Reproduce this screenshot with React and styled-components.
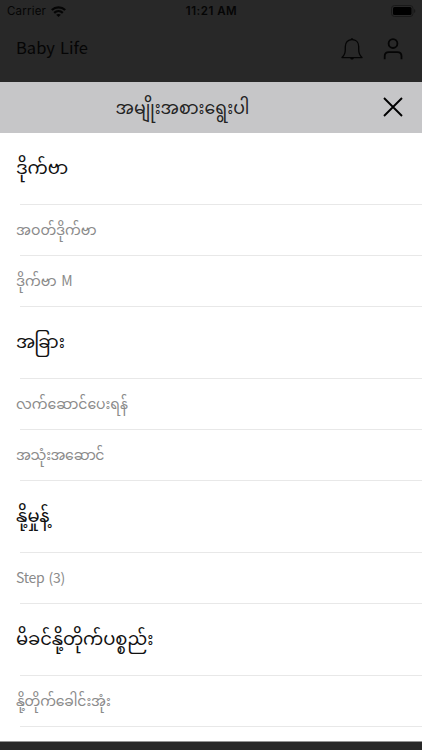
import React from 'react'
import styled, { createGlobalStyle } from 'styled-components'

const GlobalStyle = createGlobalStyle`
  * {
    box-sizing: border-box;
  }
  body {
    margin: 0;
    background-color: #282828;
    overflow: hidden;
  }
`

const Screen = styled.div`
  display: flex;
  flex-direction: column;
  width: 422px;
  height: 750px;
  overflow: hidden;
  background-color: #282828;
  font-family: "Noto Sans CJK JP", "Noto Sans Myanmar", "Noto Sans", sans-serif;
`

const StatusBar = styled.div`
  display: grid;
  grid-template-columns: 1fr auto 1fr;
  align-items: center;
  flex: none;
  height: 22px;
  padding: 0 6px 0 7px;
  font-family: Inter, sans-serif;
  font-size: 11.5px;
  letter-spacing: 0.2px;
  color: #050505;
`

const Carrier = styled.div`
  display: flex;
  align-items: center;
  gap: 5px;
`

const Clock = styled.div`
  font-weight: 600;
  letter-spacing: 0.5px;
`

const Battery = styled.svg`
  justify-self: end;
`

const NavBar = styled.div`
  display: flex;
  align-items: center;
  flex: none;
  height: 60px;
  padding: 0 18px 7px 16px;
  color: #050505;
`

const NavTitle = styled.div`
  flex: 1;
  padding-bottom: 3px;
  font-size: 16.5px;
  line-height: 24px;
  word-spacing: 1.5px;
`

const NavIcons = styled.div`
  display: flex;
  gap: 19px;
  padding-top: 1px;
`

const SheetHeader = styled.div`
  display: flex;
  align-items: center;
  flex: none;
  height: 51px;
  padding-right: 19px;
  background-color: #c6c6c8;
`

const SheetTitle = styled.div`
  flex: 1;
  margin-right: 18px;
  padding-bottom: 2px;
  font-size: 17.3px;
  line-height: 49px;
  text-align: center;
  white-space: nowrap;
  color: #222;
`

const CloseButton = styled.button`
  display: flex;
  padding: 0 0 2px;
  border: 0;
  background: none;
  color: #000;
`

const SheetBody = styled.div`
  flex: none;
  height: 608px;
  background-color: #fff;
`

const Row = styled.div`
  display: flex;
  flex-direction: column;
  height: ${props => props.$heading ? 72 : 51}px;
  color: ${props => props.$heading ? '#111' : '#8a8a8a'};
  font-size: ${props => props.$heading ? 18 : 14}px;
`

const RowLabel = styled.div`
  flex: 1;
  padding-left: 16px;
  line-height: ${props => props.$heading ? 66 : 48}px;
  letter-spacing: ${props => props.$tracking || 0}px;
  word-spacing: 1.5px;
  white-space: nowrap;
`

const Divider = styled.div`
  height: 1px;
  margin-left: 20px;
  background-color: #e8e8e8;
`

const SheetEdge = styled.div`
  flex: none;
  height: 1px;
  background-color: #939393;
`

const sections = [
  {
    title: 'ဒိုက်ဗာ',
    items: [{ label: 'အဝတ်ဒိုက်ဗာ' }, { label: 'ဒိုက်ဗာ M' }],
  },
  {
    title: 'အခြား',
    tracking: -1,
    items: [{ label: 'လက်ဆောင်ပေးရန်' }, { label: 'အသုံးအဆောင်', tracking: -0.5 }],
  },
  {
    title: 'နို့မှုန့်',
    tracking: -0.4,
    items: [{ label: 'Step (3)', tracking: -0.3 }],
  },
  {
    title: 'မိခင်နို့တိုက်ပစ္စည်း',
    tracking: -0.1,
    items: [{ label: 'နို့တိုက်ခေါင်းအုံး', tracking: -0.2 }],
  },
]

const WifiIcon = () => (
  <svg width="15" height="11" viewBox="0 0 15 11" fill="none" stroke="currentColor" strokeWidth="2.3">
    <path d="M0.8 4C4.6 0.5 10.4 0.5 14.2 4" />
    <path d="M3.2 6.8C5.7 4.6 9.3 4.6 11.8 6.8" />
    <path d="M7.5 11L5.2 8.8C6.5 7.7 8.5 7.7 9.8 8.8Z" fill="currentColor" stroke="none" />
  </svg>
)

const BatteryIcon = () => (
  <Battery width="25" height="12" viewBox="0 0 25 12">
    <rect x="0.5" y="0.5" width="21.5" height="11" rx="3" fill="none" stroke="#191919" />
    <rect x="2" y="2" width="18.5" height="8" rx="1.5" fill="#000" />
    <path d="M23.2 4V8C24.7 7.5 24.7 4.5 23.2 4Z" fill="#171717" />
  </Battery>
)

const BellIcon = () => (
  <svg width="22" height="24" viewBox="0 0 22 24" fill="none" stroke="currentColor" strokeWidth="1.3" strokeLinejoin="round">
    <path d="M1 20.6C3.7 18.2 4.3 16.5 4.3 12.5V9.5C4.3 5.5 7 2.6 11 2.6S17.7 5.5 17.7 9.5V12.5C17.7 16.5 18.3 18.2 21 20.6Z" />
    <path d="M9.6 2.5C9.8 0.8 12.2 0.8 12.4 2.5Z" fill="currentColor" stroke="none" />
    <path d="M9.2 21C9.6 23 12.4 23 12.8 21Z" fill="currentColor" stroke="none" />
  </svg>
)

const UserIcon = () => (
  <svg width="22" height="24" viewBox="0 0 22 24" fill="none" stroke="currentColor" strokeWidth="1.8">
    <circle cx="11" cy="6.6" r="4.4" />
    <path d="M2.7 22.3V19.3C2.7 16.7 4.3 15.1 6.9 15.1H15.3C17.9 15.1 19.5 16.7 19.5 19.3V22.3" />
  </svg>
)

const CloseIcon = () => (
  <svg width="20" height="20" viewBox="0 0 20 20" fill="none" stroke="currentColor" strokeWidth="1.9">
    <path d="M1 1L19 19M19 1L1 19" />
  </svg>
)

const Section = ({ title, tracking, items }) => (
  <section>
    <Row $heading>
      <RowLabel $heading $tracking={tracking}>{title}</RowLabel>
      <Divider />
    </Row>
    {items.map(item => (
      <Row key={item.label}>
        <RowLabel $tracking={item.tracking}>{item.label}</RowLabel>
        <Divider />
      </Row>
    ))}
  </section>
)

const App = () => (
  <Screen>
    <GlobalStyle />
    <StatusBar>
      <Carrier>
        Carrier
        <WifiIcon />
      </Carrier>
      <Clock>11:21 AM</Clock>
      <BatteryIcon />
    </StatusBar>
    <NavBar>
      <NavTitle>Baby Life</NavTitle>
      <NavIcons>
        <BellIcon />
        <UserIcon />
      </NavIcons>
    </NavBar>
    <SheetHeader>
      <SheetTitle>အမျိုးအစားရွေးပါ</SheetTitle>
      <CloseButton aria-label="Close">
        <CloseIcon />
      </CloseButton>
    </SheetHeader>
    <SheetBody>
      {sections.map(section => (
        <Section key={section.title} {...section} />
      ))}
    </SheetBody>
    <SheetEdge />
  </Screen>
)

export default App
